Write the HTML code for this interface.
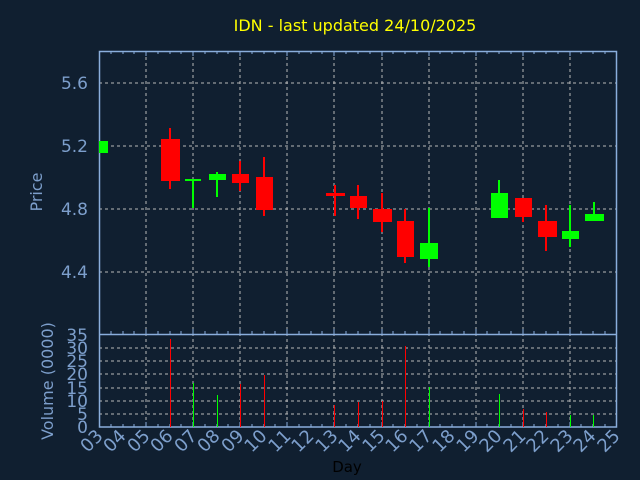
<!DOCTYPE html>
<html><head><meta charset="utf-8"><style>html,body{margin:0;padding:0;background:#101f30;}svg{display:block}</style></head>
<body>
<svg width="640" height="480" xmlns="http://www.w3.org/2000/svg" font-family="DejaVu Sans, Liberation Sans, sans-serif">
<rect width="640" height="480" fill="#101f30"/>
<text x="355" y="31" fill="#ffff00" font-size="16" text-anchor="middle">IDN - last updated 24/10/2025</text>
<g stroke="#b8b8b8" stroke-width="1" stroke-dasharray="3,3">
<line x1="146" y1="51" x2="146" y2="427"/><line x1="193" y1="51" x2="193" y2="427"/><line x1="240" y1="51" x2="240" y2="427"/><line x1="287" y1="51" x2="287" y2="427"/><line x1="334" y1="51" x2="334" y2="427"/><line x1="382" y1="51" x2="382" y2="427"/><line x1="429" y1="51" x2="429" y2="427"/><line x1="476" y1="51" x2="476" y2="427"/><line x1="523" y1="51" x2="523" y2="427"/><line x1="570" y1="51" x2="570" y2="427"/>
<line x1="99" y1="83" x2="617" y2="83"/><line x1="99" y1="146" x2="617" y2="146"/><line x1="99" y1="209" x2="617" y2="209"/><line x1="99" y1="272" x2="617" y2="272"/>
<line x1="99" y1="348" x2="617" y2="348"/><line x1="99" y1="361" x2="617" y2="361"/><line x1="99" y1="374" x2="617" y2="374"/><line x1="99" y1="388" x2="617" y2="388"/><line x1="99" y1="401" x2="617" y2="401"/><line x1="99" y1="414" x2="617" y2="414"/>
</g>
<g fill="none" stroke="#8aaedc" stroke-width="1.5">
<rect x="99.5" y="51.5" width="517" height="375.5"/>
<line x1="99" y1="334.5" x2="617" y2="334.5"/>
</g>
<g stroke="#8aaedc" stroke-width="1" id="ticks">
<path d="M111,51v3M123,51v3M134,51v3M146,51v5M158,51v3M170,51v3M181,51v3M193,51v5M205,51v3M217,51v3M228,51v3M240,51v5M252,51v3M264,51v3M275,51v3M287,51v5M299,51v3M311,51v3M322,51v3M334,51v5M346,51v3M358,51v3M370,51v3M382,51v5M393,51v3M405,51v3M417,51v3M429,51v5M440,51v3M452,51v3M464,51v3M476,51v5M487,51v3M499,51v3M511,51v3M523,51v5M534,51v3M546,51v3M558,51v3M570,51v5M581,51v3M593,51v3M605,51v3"/>
<path d="M111,334v-3M123,334v-3M134,334v-3M146,334v-5M158,334v-3M170,334v-3M181,334v-3M193,334v-5M205,334v-3M217,334v-3M228,334v-3M240,334v-5M252,334v-3M264,334v-3M275,334v-3M287,334v-5M299,334v-3M311,334v-3M322,334v-3M334,334v-5M346,334v-3M358,334v-3M370,334v-3M382,334v-5M393,334v-3M405,334v-3M417,334v-3M429,334v-5M440,334v-3M452,334v-3M464,334v-3M476,334v-5M487,334v-3M499,334v-3M511,334v-3M523,334v-5M534,334v-3M546,334v-3M558,334v-3M570,334v-5M581,334v-3M593,334v-3M605,334v-3"/>
<path d="M111,427v-3M123,427v-3M134,427v-3M146,427v-5M158,427v-3M170,427v-3M181,427v-3M193,427v-5M205,427v-3M217,427v-3M228,427v-3M240,427v-5M252,427v-3M264,427v-3M275,427v-3M287,427v-5M299,427v-3M311,427v-3M322,427v-3M334,427v-5M346,427v-3M358,427v-3M370,427v-3M382,427v-5M393,427v-3M405,427v-3M417,427v-3M429,427v-5M440,427v-3M452,427v-3M464,427v-3M476,427v-5M487,427v-3M499,427v-3M511,427v-3M523,427v-5M534,427v-3M546,427v-3M558,427v-3M570,427v-5M581,427v-3M593,427v-3M605,427v-3"/>
</g>
<!-- candles -->
<g>
<rect x="99" y="141" width="9" height="12" fill="#00ff00"/>
<line x1="170" y1="128" x2="170" y2="189" stroke="#ff0000" stroke-width="2"/><rect x="161" y="139" width="19" height="42" fill="#ff0000"/>
<line x1="193" y1="179" x2="193" y2="208" stroke="#00ff00" stroke-width="2"/><rect x="185" y="179" width="16" height="2" fill="#00ff00"/>
<line x1="217" y1="172" x2="217" y2="197" stroke="#00ff00" stroke-width="2"/><rect x="209" y="174" width="17" height="6" fill="#00ff00"/>
<line x1="240" y1="161" x2="240" y2="191" stroke="#ff0000" stroke-width="2"/><rect x="232" y="174" width="17" height="9" fill="#ff0000"/>
<line x1="264" y1="157" x2="264" y2="216" stroke="#ff0000" stroke-width="2"/><rect x="256" y="177" width="17" height="33" fill="#ff0000"/>
<line x1="335" y1="185" x2="335" y2="216" stroke="#ff0000" stroke-width="2"/><rect x="326" y="193" width="19" height="3" fill="#ff0000"/>
<line x1="358" y1="185" x2="358" y2="219" stroke="#ff0000" stroke-width="2"/><rect x="350" y="196" width="17" height="12" fill="#ff0000"/>
<line x1="382" y1="193" x2="382" y2="232" stroke="#ff0000" stroke-width="2"/><rect x="373" y="209" width="19" height="13" fill="#ff0000"/>
<line x1="405" y1="209" x2="405" y2="263" stroke="#ff0000" stroke-width="2"/><rect x="397" y="221" width="17" height="36" fill="#ff0000"/>
<line x1="429" y1="208" x2="429" y2="267" stroke="#00ff00" stroke-width="2"/><rect x="420" y="243" width="18" height="16" fill="#00ff00"/>
<line x1="499" y1="180" x2="499" y2="218" stroke="#00ff00" stroke-width="2"/><rect x="491" y="193" width="17" height="25" fill="#00ff00"/>
<line x1="523" y1="198" x2="523" y2="222" stroke="#ff0000" stroke-width="2"/><rect x="515" y="198" width="17" height="19" fill="#ff0000"/>
<line x1="546" y1="205" x2="546" y2="251" stroke="#ff0000" stroke-width="2"/><rect x="538" y="221" width="19" height="16" fill="#ff0000"/>
<line x1="570" y1="205" x2="570" y2="247" stroke="#00ff00" stroke-width="2"/><rect x="562" y="231" width="17" height="8" fill="#00ff00"/>
<line x1="594" y1="202" x2="594" y2="221" stroke="#00ff00" stroke-width="2"/><rect x="585" y="214" width="19" height="7" fill="#00ff00"/>
</g>
<!-- volume -->
<g stroke-width="1">
<line x1="170.5" y1="339" x2="170.5" y2="427" stroke="#ff0000"/>
<line x1="193.5" y1="383" x2="193.5" y2="427" stroke="#00ff00"/>
<line x1="217.5" y1="395" x2="217.5" y2="427" stroke="#00ff00"/>
<line x1="240.5" y1="384" x2="240.5" y2="427" stroke="#ff0000"/>
<line x1="264.5" y1="375" x2="264.5" y2="427" stroke="#ff0000"/>
<line x1="334.5" y1="405" x2="334.5" y2="427" stroke="#ff0000"/>
<line x1="358.5" y1="402" x2="358.5" y2="427" stroke="#ff0000"/>
<line x1="382.5" y1="401" x2="382.5" y2="427" stroke="#ff0000"/>
<line x1="405.5" y1="346" x2="405.5" y2="427" stroke="#ff0000"/>
<line x1="429.5" y1="387" x2="429.5" y2="427" stroke="#00ff00"/>
<line x1="499.5" y1="394" x2="499.5" y2="427" stroke="#00ff00"/>
<line x1="523.5" y1="409" x2="523.5" y2="427" stroke="#ff0000"/>
<line x1="546.5" y1="412" x2="546.5" y2="427" stroke="#ff0000"/>
<line x1="570.5" y1="415" x2="570.5" y2="427" stroke="#00ff00"/>
<line x1="593.5" y1="415" x2="593.5" y2="427" stroke="#00ff00"/>
</g>
<g fill="#7d9fcc" font-size="17" text-anchor="end">
<text x="88" y="89">5.6</text><text x="88" y="152">5.2</text><text x="88" y="215">4.8</text><text x="88" y="278">4.4</text>
<text x="88" y="341">35</text><text x="88" y="354">30</text><text x="88" y="367">25</text><text x="88" y="380">20</text><text x="88" y="394">15</text><text x="88" y="407">10</text><text x="88" y="420">5</text><text x="88" y="433">0</text>
</g>
<text transform="translate(42,192) rotate(-90)" fill="#7d9fcc" font-size="16" text-anchor="middle">Price</text>
<text transform="translate(53,381) rotate(-90)" fill="#7d9fcc" font-size="16" text-anchor="middle">Volume (0000)</text>
<text x="347" y="472" fill="#000" font-size="15" text-anchor="middle">Day</text>
<g fill="#7d9fcc" font-size="18" text-anchor="end">
<text transform="translate(104,437) rotate(-45)">03</text><text transform="translate(127,437) rotate(-45)">04</text><text transform="translate(151,437) rotate(-45)">05</text><text transform="translate(174,437) rotate(-45)">06</text><text transform="translate(198,437) rotate(-45)">07</text><text transform="translate(221,437) rotate(-45)">08</text><text transform="translate(245,437) rotate(-45)">09</text><text transform="translate(268,437) rotate(-45)">10</text><text transform="translate(292,437) rotate(-45)">11</text><text transform="translate(315,437) rotate(-45)">12</text><text transform="translate(339,437) rotate(-45)">13</text><text transform="translate(362,437) rotate(-45)">14</text><text transform="translate(386,437) rotate(-45)">15</text><text transform="translate(409,437) rotate(-45)">16</text><text transform="translate(433,437) rotate(-45)">17</text><text transform="translate(456,437) rotate(-45)">18</text><text transform="translate(480,437) rotate(-45)">19</text><text transform="translate(503,437) rotate(-45)">20</text><text transform="translate(527,437) rotate(-45)">21</text><text transform="translate(550,437) rotate(-45)">22</text><text transform="translate(574,437) rotate(-45)">23</text><text transform="translate(597,437) rotate(-45)">24</text><text transform="translate(621,437) rotate(-45)">25</text>
</g>
</svg>
</body></html>
